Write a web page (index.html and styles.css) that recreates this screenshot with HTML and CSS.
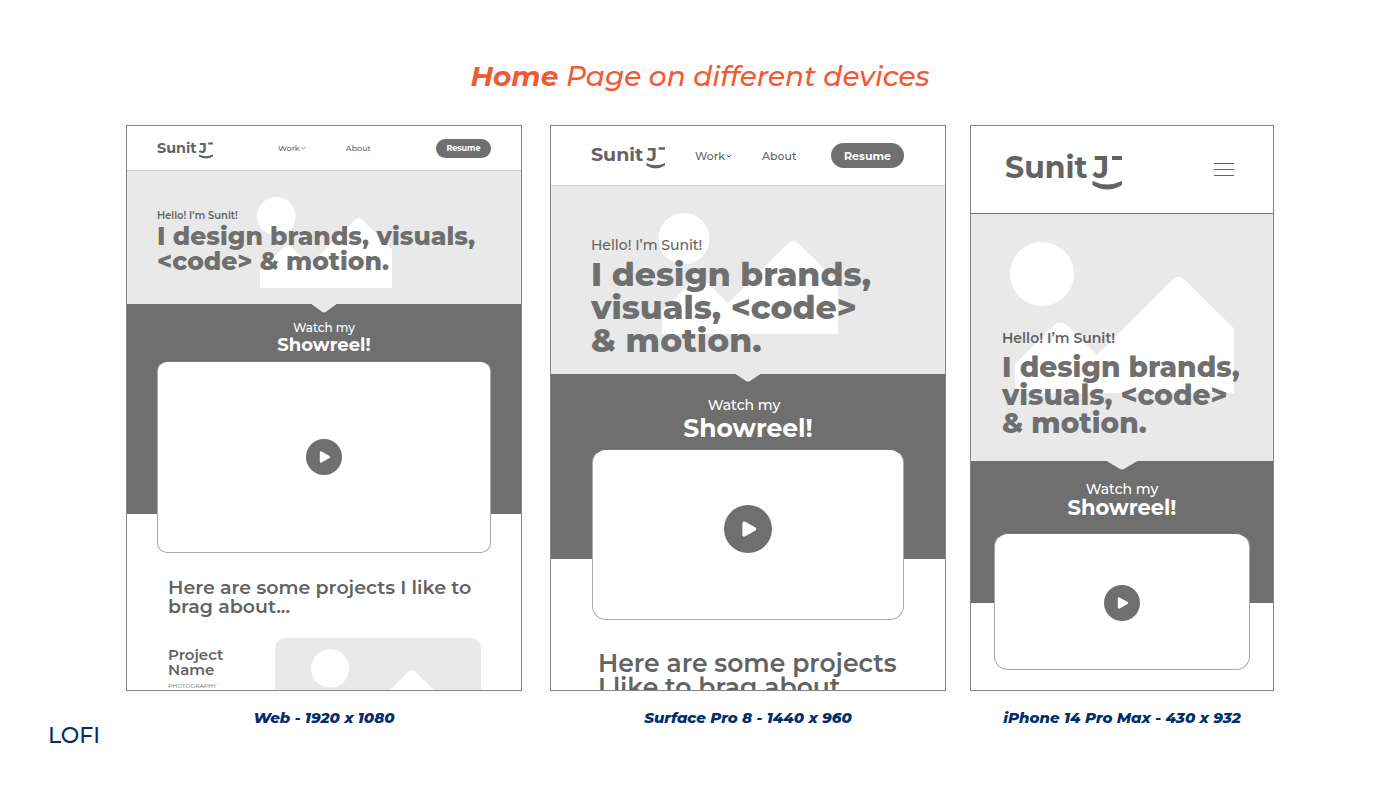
FILE: index.html
```html
<!DOCTYPE html>
<html lang="en">
<head>
<meta charset="utf-8">
<meta name="viewport" content="width=device-width, initial-scale=1">
<title>Home Page on different devices</title>
<link rel="stylesheet" href="styles.css">
</head>
<body>
<svg class="defs" aria-hidden="true">
  <symbol id="logo-mark" viewBox="0 0 117 37">
    <path d="M107 3h10v4h-10zM87.500 28Q102 35 117 28v4Q102 41 87.500 32z"/>
  </symbol>
  <symbol id="scene" viewBox="0 0 224 151">
    <circle cx="32" cy="32" r="32"/>
    <path d="M5 151V122L43.200 84Q50.500 76.700 57.800 84L87 113L162 38Q168.500 31.500 175 38L224 86.500V151z"/>
  </symbol>
  <symbol id="play" viewBox="0 0 36 36">
    <path d="M15 13.500L23 18L15 22.500z" stroke="currentColor" stroke-width="2.400" stroke-linejoin="round"/>
  </symbol>
  <symbol id="notch" viewBox="0 0 28 10" preserveAspectRatio="none">
    <path d="M0 0H28L16 8.800Q14 10 12 8.800z"/>
  </symbol>
  <symbol id="chevron" viewBox="0 0 6 4">
    <path d="M.6.8L3 3L5.400.8" fill="none" stroke="currentColor"/>
  </symbol>
</svg>

<main class="board">
  <h1 class="board-title"><strong>Home</strong> Page on different devices</h1>

  <div class="devices">
    <figure class="device device-web">
      <div class="screen">
        <nav class="nav">
          <svg class="logo" viewBox="0 0 117 37"><text class="logo-text" x="0" y="25">Sunit</text><text class="logo-text" x="88" y="25">J</text><use href="#logo-mark"/></svg>
          <div class="links">
            <a href="#">Work<svg class="chevron" aria-hidden="true"><use href="#chevron"/></svg></a>
            <a href="#">About</a>
          </div>
          <button class="resume" type="button">Resume</button>
        </nav>
        <header class="hero">
          <svg class="scene" aria-hidden="true"><use href="#scene"/></svg>
          <p class="hello">Hello! I’m Sunit!</p>
          <h2 class="headline">I design brands, visuals,<br>&lt;code&gt; &amp; motion.</h2>
        </header>
        <section class="reel">
          <svg class="notch" aria-hidden="true"><use href="#notch"/></svg>
          <p class="watch">Watch my</p>
          <h3 class="showreel">Showreel!</h3>
          <div class="video"><button class="play" type="button" aria-label="Play"><svg><use href="#play"/></svg></button></div>
        </section>
        <section class="projects">
          <h3 class="brag">Here are some projects I like to<br>brag about...</h3>
          <article class="project">
            <div class="project-info">
              <h4 class="project-name">Project<br>Name</h4>
              <p class="tag">PHOTOGRAPHY</p>
            </div>
            <div class="thumb"><svg class="thumb-scene" aria-hidden="true"><use href="#scene"/></svg></div>
          </article>
        </section>
      </div>
      <figcaption class="caption">Web - 1920 x 1080</figcaption>
    </figure>

    <figure class="device device-surface">
      <div class="screen">
        <nav class="nav">
          <svg class="logo" viewBox="0 0 117 37"><text class="logo-text" x="0" y="25">Sunit</text><text class="logo-text" x="88" y="25">J</text><use href="#logo-mark"/></svg>
          <div class="links">
            <a href="#">Work<svg class="chevron" aria-hidden="true"><use href="#chevron"/></svg></a>
            <a href="#">About</a>
          </div>
          <button class="resume" type="button">Resume</button>
        </nav>
        <header class="hero">
          <svg class="scene" aria-hidden="true"><use href="#scene"/></svg>
          <p class="hello">Hello! I’m Sunit!</p>
          <h2 class="headline">I design brands,<br>visuals, &lt;code&gt;<br>&amp; motion.</h2>
        </header>
        <section class="reel">
          <svg class="notch" aria-hidden="true"><use href="#notch"/></svg>
          <p class="watch">Watch my</p>
          <h3 class="showreel">Showreel!</h3>
          <div class="video"><button class="play" type="button" aria-label="Play"><svg><use href="#play"/></svg></button></div>
        </section>
        <section class="projects">
          <h3 class="brag">Here are some projects<br>I like to brag about</h3>
        </section>
      </div>
      <figcaption class="caption">Surface Pro 8 - 1440 x 960</figcaption>
    </figure>

    <figure class="device device-phone">
      <div class="screen">
        <nav class="nav">
          <svg class="logo" viewBox="0 0 117 37"><text class="logo-text" x="0" y="25">Sunit</text><text class="logo-text" x="88" y="25">J</text><use href="#logo-mark"/></svg>
          <button class="menu" type="button" aria-label="Menu"><span></span><span></span><span></span></button>
        </nav>
        <header class="hero">
          <svg class="scene" aria-hidden="true"><use href="#scene"/></svg>
          <p class="hello">Hello! I’m Sunit!</p>
          <h2 class="headline">I design brands,<br>visuals, &lt;code&gt;<br>&amp; motion.</h2>
        </header>
        <section class="reel">
          <svg class="notch" aria-hidden="true"><use href="#notch"/></svg>
          <p class="watch">Watch my</p>
          <h3 class="showreel">Showreel!</h3>
          <div class="video"><button class="play" type="button" aria-label="Play"><svg><use href="#play"/></svg></button></div>
        </section>
      </div>
      <figcaption class="caption">iPhone 14 Pro Max - 430 x 932</figcaption>
    </figure>
  </div>

  <footer class="fidelity">LOFI</footer>
</main>
</body>
</html>
```
FILE: styles.css
```css
* { box-sizing: border-box; }

:root {
  --ink: #636363;
  --fill: #6f6f6f;
  --pale: #e9e9e9;
  --navy: #002f6c;
}

body {
  margin: 0;
  background: #fefefe;
  color: var(--ink);
  font-family: Montserrat, Inter, sans-serif;
}

h1, h2, h3, h4, p, figure { margin: 0; }
button { border: 0; padding: 0; font: inherit; }
svg { display: block; }
.defs { position: absolute; width: 0; height: 0; }

.board { padding: 56px 0 40px; }

.board-title {
  color: #f05a35;
  font-size: 28px;
  line-height: 40px;
  font-weight: 500;
  font-style: italic;
  text-align: center;
}
.board-title strong { font-weight: 700; }

.devices {
  display: grid;
  grid-template-columns: 400fr 396fr 304fr;
  column-gap: 24px;
  margin-top: 29px;
  padding: 0 126px;
}
.device { min-width: 0; }
.device-web { padding-right: 4px; }

.screen {
  aspect-ratio: 396 / 566;
  overflow: hidden;
  border: 1px solid #858585;
  background: #fff;
}
.device-phone .screen { aspect-ratio: 304 / 566; }

.caption {
  margin-top: 19px;
  color: var(--navy);
  font-size: 15px;
  line-height: 16px;
  font-weight: 800;
  font-style: italic;
  text-align: center;
}

.fidelity {
  padding-left: 48px;
  color: var(--navy);
  font-size: 22px;
  line-height: 20px;
  font-weight: 500;
}

/* Navigation */
.nav {
  display: flex;
  align-items: center;
  height: 45px;
  padding: 0 30px;
  border-bottom: 1px solid #ccc;
}
.logo { width: 56px; height: 18px; margin-top: 3px; overflow: visible; fill: var(--ink); }
.logo-text { font-size: 30px; font-weight: 700; }
.links { display: flex; gap: 40px; margin-left: 65px; font-size: 8px; font-weight: 500; }
.links a { display: flex; align-items: center; gap: 1px; color: inherit; text-decoration: none; }
.chevron { width: 5px; height: 4px; }
.resume {
  width: 55px;
  height: 19px;
  margin-left: auto;
  border-radius: 16px;
  background: var(--fill);
  color: #fff;
  font-size: 8px;
  font-weight: 700;
}
.menu {
  display: flex;
  flex-direction: column;
  gap: 5px;
  width: 20px;
  margin-left: auto;
  background: none;
}
.menu span { height: 1px; background: var(--ink); }

/* Hero */
.hero { position: relative; padding: 37px 30px 30px; background: var(--pale); }
.scene { position: absolute; left: 130px; top: 26px; width: 135px; height: 91px; fill: #fff; }
.hello { position: relative; font-size: 10px; line-height: 16px; font-weight: 600; }
.headline {
  position: relative;
  color: var(--fill);
  font-size: 25px;
  line-height: 25px;
  font-weight: 800;
  white-space: nowrap;
}

/* Showreel */
.reel {
  --overhang: 39px;
  position: relative;
  padding: 17px 30px 0;
  background: linear-gradient(var(--fill), var(--fill)) no-repeat 0 0 / 100% calc(100% - var(--overhang));
  color: #fff;
  text-align: center;
}
.notch { position: absolute; left: 50%; top: -1px; width: 28px; height: 10px; transform: translateX(-50%); fill: var(--pale); }
.watch { font-size: 12px; line-height: 14px; font-weight: 500; }
.showreel { font-size: 18px; line-height: 20px; font-weight: 700; }
.video {
  display: flex;
  align-items: center;
  justify-content: center;
  height: 192px;
  margin-top: 6px;
  border: 1px solid #aaa;
  border-top-color: #777;
  border-radius: 10px;
  background: #fff;
}
.play { width: 36px; height: 36px; border-radius: 50%; background: var(--fill); color: #fff; }
.play svg { width: 100%; height: 100%; fill: currentColor; }

/* Projects */
.projects { padding: 25px 40px 0 41px; }
.brag { font-size: 19px; line-height: 19px; font-weight: 600; white-space: nowrap; }
.project { display: flex; justify-content: space-between; margin-top: 22px; }
.project-info { padding-top: 9px; }
.project-name { font-size: 15px; line-height: 15px; font-weight: 600; }
.tag { margin-top: 5px; font-size: 6px; line-height: 8px; }
.thumb { width: 206px; height: 120px; padding: 11px 36px; border-radius: 10px; background: var(--pale); }
.thumb-scene { width: 134px; height: 91px; fill: #fff; }

/* Surface */
.device-surface .nav { height: 60px; padding: 0 41px 0 40px; }
.device-surface .logo { width: 74px; height: 24px; }
.device-surface .links { gap: 30px; margin-left: 30px; font-size: 11px; }
.device-surface .chevron { width: 6px; }
.device-surface .resume { width: 73px; height: 25px; font-size: 11px; }
.device-surface .hero { padding: 49px 40px 17px; }
.device-surface .scene { left: 107px; top: 27px; width: 180px; height: 121px; }
.device-surface .hello { font-size: 14px; line-height: 20px; font-weight: 500; }
.device-surface .headline { margin-top: 3px; font-size: 33px; line-height: 33px; }
.device-surface .reel { --overhang: 61px; padding: 22px 41px 0; }
.device-surface .notch { height: 9px; }
.device-surface .watch { padding-right: 8px; font-size: 14px; line-height: 18px; }
.device-surface .showreel { font-size: 25px; line-height: 28px; }
.device-surface .video { height: 171px; margin-top: 7px; padding-bottom: 12px; border-radius: 14px; }
.device-surface .play { width: 48px; height: 48px; }
.device-surface .projects { padding: 31px 47px 0; }
.device-surface .brag { font-size: 25px; line-height: 24px; }

/* Phone */
.device-phone .nav { height: 88px; padding: 0 39px 0 34px; border-color: #777; }
.device-phone .logo { width: 117px; height: 37px; }
.device-phone .hero { padding: 114px 31px 24px; }
.device-phone .scene { left: 39px; top: 28px; width: 224px; height: 151px; }
.device-phone .hello { font-size: 14px; line-height: 20px; }
.device-phone .headline { margin-top: 5px; font-size: 28px; line-height: 28px; }
.device-phone .reel { --overhang: 67px; padding: 20px 23px 0; }
.device-phone .notch { width: 34px; }
.device-phone .watch { font-size: 14px; line-height: 16px; }
.device-phone .showreel { font-size: 21px; line-height: 22px; }
.device-phone .video { height: 137px; margin-top: 14px; padding-top: 3px; border-radius: 14px; }
```
